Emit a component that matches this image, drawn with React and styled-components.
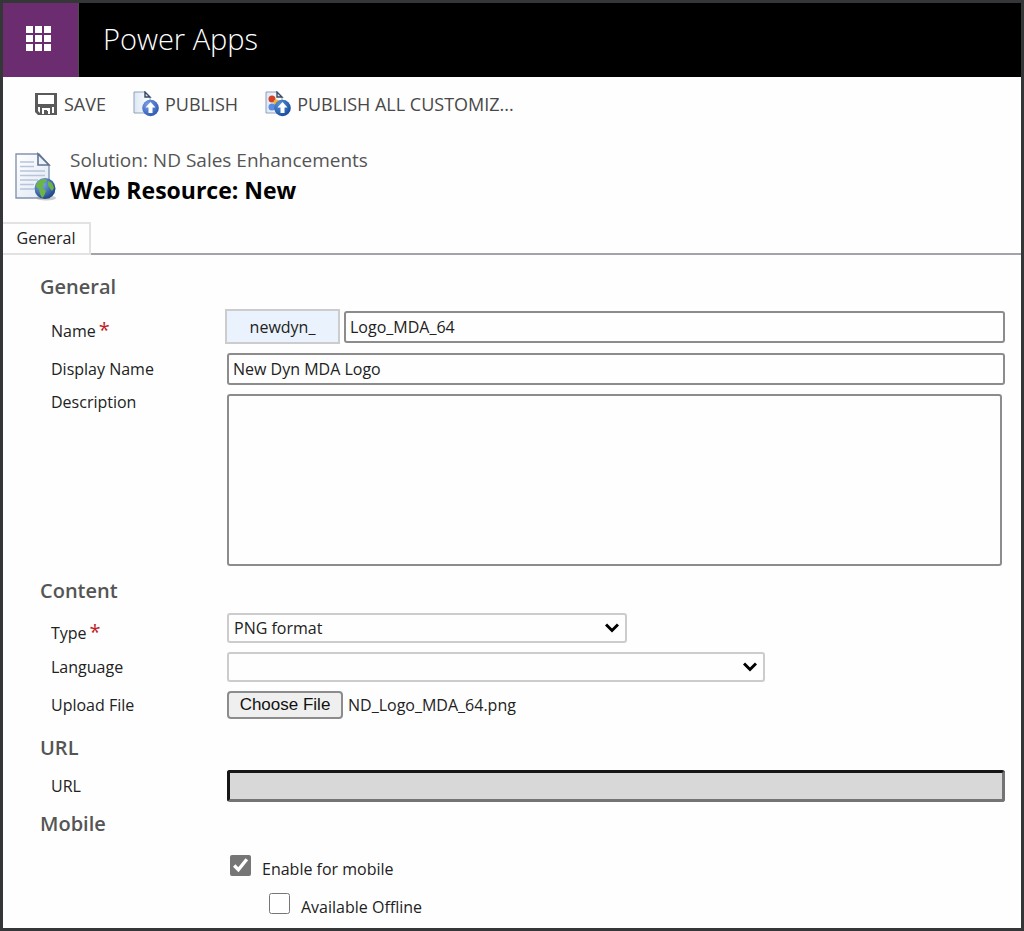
import React, { useState } from "react";
import styled, { createGlobalStyle } from "styled-components";

const GlobalStyle = createGlobalStyle`
  * {
    box-sizing: border-box;
  }

  body {
    margin: 0;
    background: #fefefe;
    color: #222;
    font-family: "Open Sans", "Noto Sans", sans-serif;
    font-size: 16px;
    line-height: 20px;
  }

  input, select, textarea, button {
    font: inherit;
    color: inherit;
  }
`;

const Page = styled.div`
  min-height: 100vh;
  border: 3px solid #353637;
  background: #fefefe;
`;

const TopBar = styled.header`
  display: flex;
  height: 74px;
  background: #000;
`;

const Launcher = styled.button`
  display: flex;
  align-items: center;
  justify-content: center;
  width: 76px;
  padding: 0 4px 2px 0;
  border: 0;
  border-right: 1px solid #4c4c4c;
  background: #6b2d70;
`;

const AppName = styled.div`
  padding-left: 24px;
  color: #fff;
  font-size: 29px;
  font-weight: 300;
  line-height: 72px;
`;

const Toolbar = styled.nav`
  display: flex;
  align-items: center;
  gap: 27px;
  height: 54px;
  padding-left: 31px;
`;

const ToolButton = styled.button`
  display: flex;
  align-items: center;
  gap: 6px;
  padding: 0;
  border: 0;
  background: none;
  color: #484848;
  font-size: 18px;
  font-weight: 500;
  line-height: 24px;
  white-space: nowrap;
`;

const TitleBar = styled.div`
  display: flex;
  align-items: center;
  gap: 11px;
  height: 88px;
  padding: 3px 0 0 10px;
`;

const SolutionName = styled.div`
  color: #555;
  font-size: 19px;
  line-height: 26px;
`;

const Title = styled.h1`
  margin: 0;
  color: #000;
  font-size: 23px;
  font-weight: 700;
  line-height: 34px;
`;

const Tabs = styled.div`
  display: flex;
  height: 36px;
  align-items: flex-end;

  &::after {
    content: "";
    flex: 1;
    border-bottom: 2px solid #a3a3aa;
  }
`;

const Tab = styled.button`
  width: 88px;
  height: 33px;
  padding: 0 0 2px 0;
  border: 2px solid #e2e2e2;
  border-left: 0;
  background: #fefefe;
`;

const Form = styled.form`
  padding: 8px 16px 0 37px;
`;

const Section = styled.section`
  display: grid;
  gap: 9px;
  padding-top: ${(props) => props.$top}px;
`;

const SectionTitle = styled.h2`
  margin: 0;
  color: #555;
  font-size: 20px;
  font-weight: 600;
  line-height: 27px;
`;

const Row = styled.div`
  display: grid;
  grid-template-columns: 176px 1fr;
  align-items: ${(props) => (props.$alignTop ? "start" : "center")};
  padding-left: 11px;
`;

const Label = styled.label`
  padding-top: ${(props) => (props.$required ? 8 : 0)}px;
  line-height: ${(props) => (props.$tight ? 16 : 20)}px;
`;

const Required = styled.span`
  padding-left: 3px;
  color: #c0211f;
  font-size: 20px;
`;

const NameFields = styled.div`
  display: grid;
  grid-template-columns: 115px 1fr;
  align-items: center;
  gap: 4px;
  margin-left: -2px;
`;

const Prefix = styled.div`
  height: 35px;
  border: 2px solid #ccc;
  background: #eaf2fe;
  line-height: 32px;
  text-align: center;
`;

const TextInput = styled.input`
  width: 100%;
  height: 32px;
  padding: 0 4px;
  border: 2px solid #8c8c8c;
  border-radius: 3px;
  background: #fefefe;
`;

const UrlInput = styled(TextInput)`
  border-width: 3px;
  border-color: #161616 #747474 #747474 #161616;
  background: #d8d8d8;
`;

const TextArea = styled.textarea`
  display: block;
  width: calc(100% - 3px);
  height: 172px;
  border: 2px solid #8c8c8c;
  border-radius: 3px;
  background: #fefefe;
  resize: none;
`;

const SelectBox = styled.div`
  display: grid;
  align-items: center;
  width: ${(props) => props.$width}px;
  max-width: 100%;

  > * {
    grid-area: 1 / 1;
  }

  svg {
    justify-self: end;
    margin-right: 8px;
    pointer-events: none;
  }
`;

const Select = styled.select`
  width: 100%;
  height: 30px;
  padding: 0 28px 0 5px;
  border: 2px solid #ccc;
  border-radius: 3px;
  background: #fefefe;
  appearance: none;
`;

const FilePicker = styled.div`
  display: flex;
  align-items: center;
  gap: 5px;
`;

const FileButton = styled.label`
  width: 116px;
  height: 28px;
  border: 2px solid #8c8c8c;
  border-radius: 4px;
  background: #efefef;
  color: #111;
  font-family: "Liberation Sans", Arial, sans-serif;
  font-size: 17px;
  line-height: 24px;
  text-align: center;

  input {
    position: absolute;
    width: 1px;
    height: 1px;
    opacity: 0;
  }
`;

const Checks = styled.div`
  display: grid;
  gap: 8px;
  padding: 5px 0 3px 190px;
`;

const CheckLabel = styled.label`
  display: flex;
  gap: 11px;
  height: 30px;
  padding-left: ${(props) => (props.$nested ? 39 : 0)}px;
  line-height: 36px;

  input {
    width: 21px;
    height: 21px;
    margin: 4px 0 0;
    accent-color: #767676;
  }
`;

const WaffleIcon = () => (
  <svg width="26" height="26" viewBox="0 0 26 26" fill="#fff" aria-hidden="true">
    {[0, 9, 18].map((y) =>
      [0, 9, 18].map((x) => <rect key={`${x}-${y}`} x={x} y={y} width="7" height="7" />)
    )}
  </svg>
);

const SaveIcon = () => (
  <svg width="24" height="24" viewBox="0 0 24 24" aria-hidden="true">
    <path fill="#5a5a5a" d="M1 1h22v22H4l-3-3z" />
    <path fill="#fff" d="M4 3h16v9H4zM4 15h16v6H6l-2-2z" />
    <path fill="#5a5a5a" d="M6 15h12v7H6z" />
    <path fill="#fff" d="M8 16h8v6h-2v-3h-4v3H8z" />
    <path fill="#5a5a5a" d="M10 18h3v4h-3z" />
  </svg>
);

const PublishIcon = ({ all }) => {
  const id = all ? "badgeAll" : "badge";
  return (
    <svg width="26" height="26" viewBox="0 0 26 26" aria-hidden="true">
      <defs>
        <radialGradient id={id} cx=".35" cy=".3" r=".8">
          <stop offset="0" stopColor={all ? "#5c93da" : "#7ba0e8"} />
          <stop offset="1" stopColor={all ? "#0f4595" : "#2852ad"} />
        </radialGradient>
        <linearGradient id={`${id}Page`}>
          <stop offset="0" stopColor="#dce7f5" />
          <stop offset="1" stopColor="#fff" />
        </linearGradient>
      </defs>
      <path d="M1 1h11l5 5v16H1z" fill={`url(#${id}Page)`} stroke="#8fa2bd" />
      <path d="M12 1v5h5z" fill="#dbe4f0" stroke="#384963" strokeWidth="1.4" />
      {all && (
        <>
          <circle cx="7" cy="8" r="3.5" fill="#d44124" />
          <circle cx="11.5" cy="11.5" r="3" fill="#e9b63b" />
          <circle cx="7" cy="16" r="3.5" fill="#5b8ce2" />
        </>
      )}
      <circle cx="17.5" cy="17" r="8.3" fill={`url(#${id})`} />
      <path d="M17.5 11l5 5.5h-3V22h-4v-5.5h-3z" fill="#fff" />
    </svg>
  );
};

const WebResourceIcon = () => (
  <svg width="46" height="50" viewBox="0 0 46 50" aria-hidden="true">
    <defs>
      <linearGradient id="sheet" x2="1" y2="1">
        <stop offset="0" stopColor="#fff" />
        <stop offset="1" stopColor="#dfe8f4" />
      </linearGradient>
      <radialGradient id="globe" cx=".35" cy=".3" r=".8">
        <stop offset="0" stopColor="#7db0ee" />
        <stop offset="1" stopColor="#17397e" />
      </radialGradient>
    </defs>
    <path d="M3 2h23l10 11v33H3z" fill="url(#sheet)" stroke="#8395b0" strokeWidth="1.4" />
    <path d="M25 2v11h11z" fill="#eef3fa" stroke="#5f7391" strokeWidth="1.6" />
    <path
      d="M7 10h14M7 14.500h14M7 19h25M7 23.500h25M7 28h18M7 32.500h14M7 37h14"
      stroke="#b7c4d9"
      strokeWidth="1.6"
    />
    <ellipse cx="33" cy="46" rx="10" ry="2.500" fill="#999" opacity=".5" />
    <circle cx="32" cy="36.500" r="10.500" fill="url(#globe)" />
    <path
      d="M24 31c2-3 5-4 9-4l1 2-4 3 1 2-4 3-3-1-1-2zM26 37l4-1 3 3-2 5-2 2-2-4zM35 29l4 2 2 5-2 3-3-4-1-2z"
      fill="#6cb544"
    />
  </svg>
);

const Chevron = () => (
  <svg width="14" height="10" viewBox="0 0 14 10" aria-hidden="true">
    <path d="M1 1.500l6 6 6-6" fill="none" stroke="#000" strokeWidth="3" />
  </svg>
);

const App = () => {
  const [name, setName] = useState("Logo_MDA_64");
  const [displayName, setDisplayName] = useState("New Dyn MDA Logo");
  const [fileName, setFileName] = useState("ND_Logo_MDA_64.png");

  const handleFile = (e) => {
    if (e.target.files.length) {
      setFileName(e.target.files[0].name);
    }
  };

  return (
    <Page>
      <GlobalStyle />
      <TopBar>
        <Launcher aria-label="App launcher">
          <WaffleIcon />
        </Launcher>
        <AppName>Power Apps</AppName>
      </TopBar>
      <Toolbar>
        <ToolButton>
          <SaveIcon />
          SAVE
        </ToolButton>
        <ToolButton>
          <PublishIcon />
          PUBLISH
        </ToolButton>
        <ToolButton>
          <PublishIcon all />
          PUBLISH ALL CUSTOMIZ...
        </ToolButton>
      </Toolbar>
      <TitleBar>
        <WebResourceIcon />
        <div>
          <SolutionName>Solution: ND Sales Enhancements</SolutionName>
          <Title>Web Resource: New</Title>
        </div>
      </TitleBar>
      <Tabs>
        <Tab>General</Tab>
      </Tabs>
      <Form onSubmit={(e) => e.preventDefault()}>
        <Section $top={10}>
          <SectionTitle>General</SectionTitle>
          <Row>
            <Label htmlFor="name" $required>
              Name
              <Required>*</Required>
            </Label>
            <NameFields>
              <Prefix>newdyn_</Prefix>
              <TextInput id="name" value={name} onChange={(e) => setName(e.target.value)} />
            </NameFields>
          </Row>
          <Row>
            <Label htmlFor="displayName">Display Name</Label>
            <TextInput
              id="displayName"
              value={displayName}
              onChange={(e) => setDisplayName(e.target.value)}
            />
          </Row>
          <Row $alignTop>
            <Label htmlFor="description" $tight>
              Description
            </Label>
            <TextArea id="description" />
          </Row>
        </Section>
        <Section $top={11}>
          <SectionTitle>Content</SectionTitle>
          <Row>
            <Label htmlFor="type" $required>
              Type
              <Required>*</Required>
            </Label>
            <SelectBox $width={400}>
              <Select id="type">
                <option>PNG format</option>
              </Select>
              <Chevron />
            </SelectBox>
          </Row>
          <Row>
            <Label htmlFor="language">Language</Label>
            <SelectBox $width={538}>
              <Select id="language">
                <option></option>
              </Select>
              <Chevron />
            </SelectBox>
          </Row>
          <Row>
            <Label htmlFor="upload">Upload File</Label>
            <FilePicker>
              <FileButton>
                Choose File
                <input id="upload" type="file" onChange={handleFile} />
              </FileButton>
              <span>{fileName}</span>
            </FilePicker>
          </Row>
        </Section>
        <Section $top={15}>
          <SectionTitle>URL</SectionTitle>
          <Row>
            <Label htmlFor="url">URL</Label>
            <UrlInput id="url" readOnly />
          </Row>
        </Section>
        <Section $top={8}>
          <SectionTitle>Mobile</SectionTitle>
          <Checks>
            <CheckLabel>
              <input type="checkbox" defaultChecked />
              Enable for mobile
            </CheckLabel>
            <CheckLabel $nested>
              <input type="checkbox" />
              Available Offline
            </CheckLabel>
          </Checks>
        </Section>
      </Form>
    </Page>
  );
};

export default App;
